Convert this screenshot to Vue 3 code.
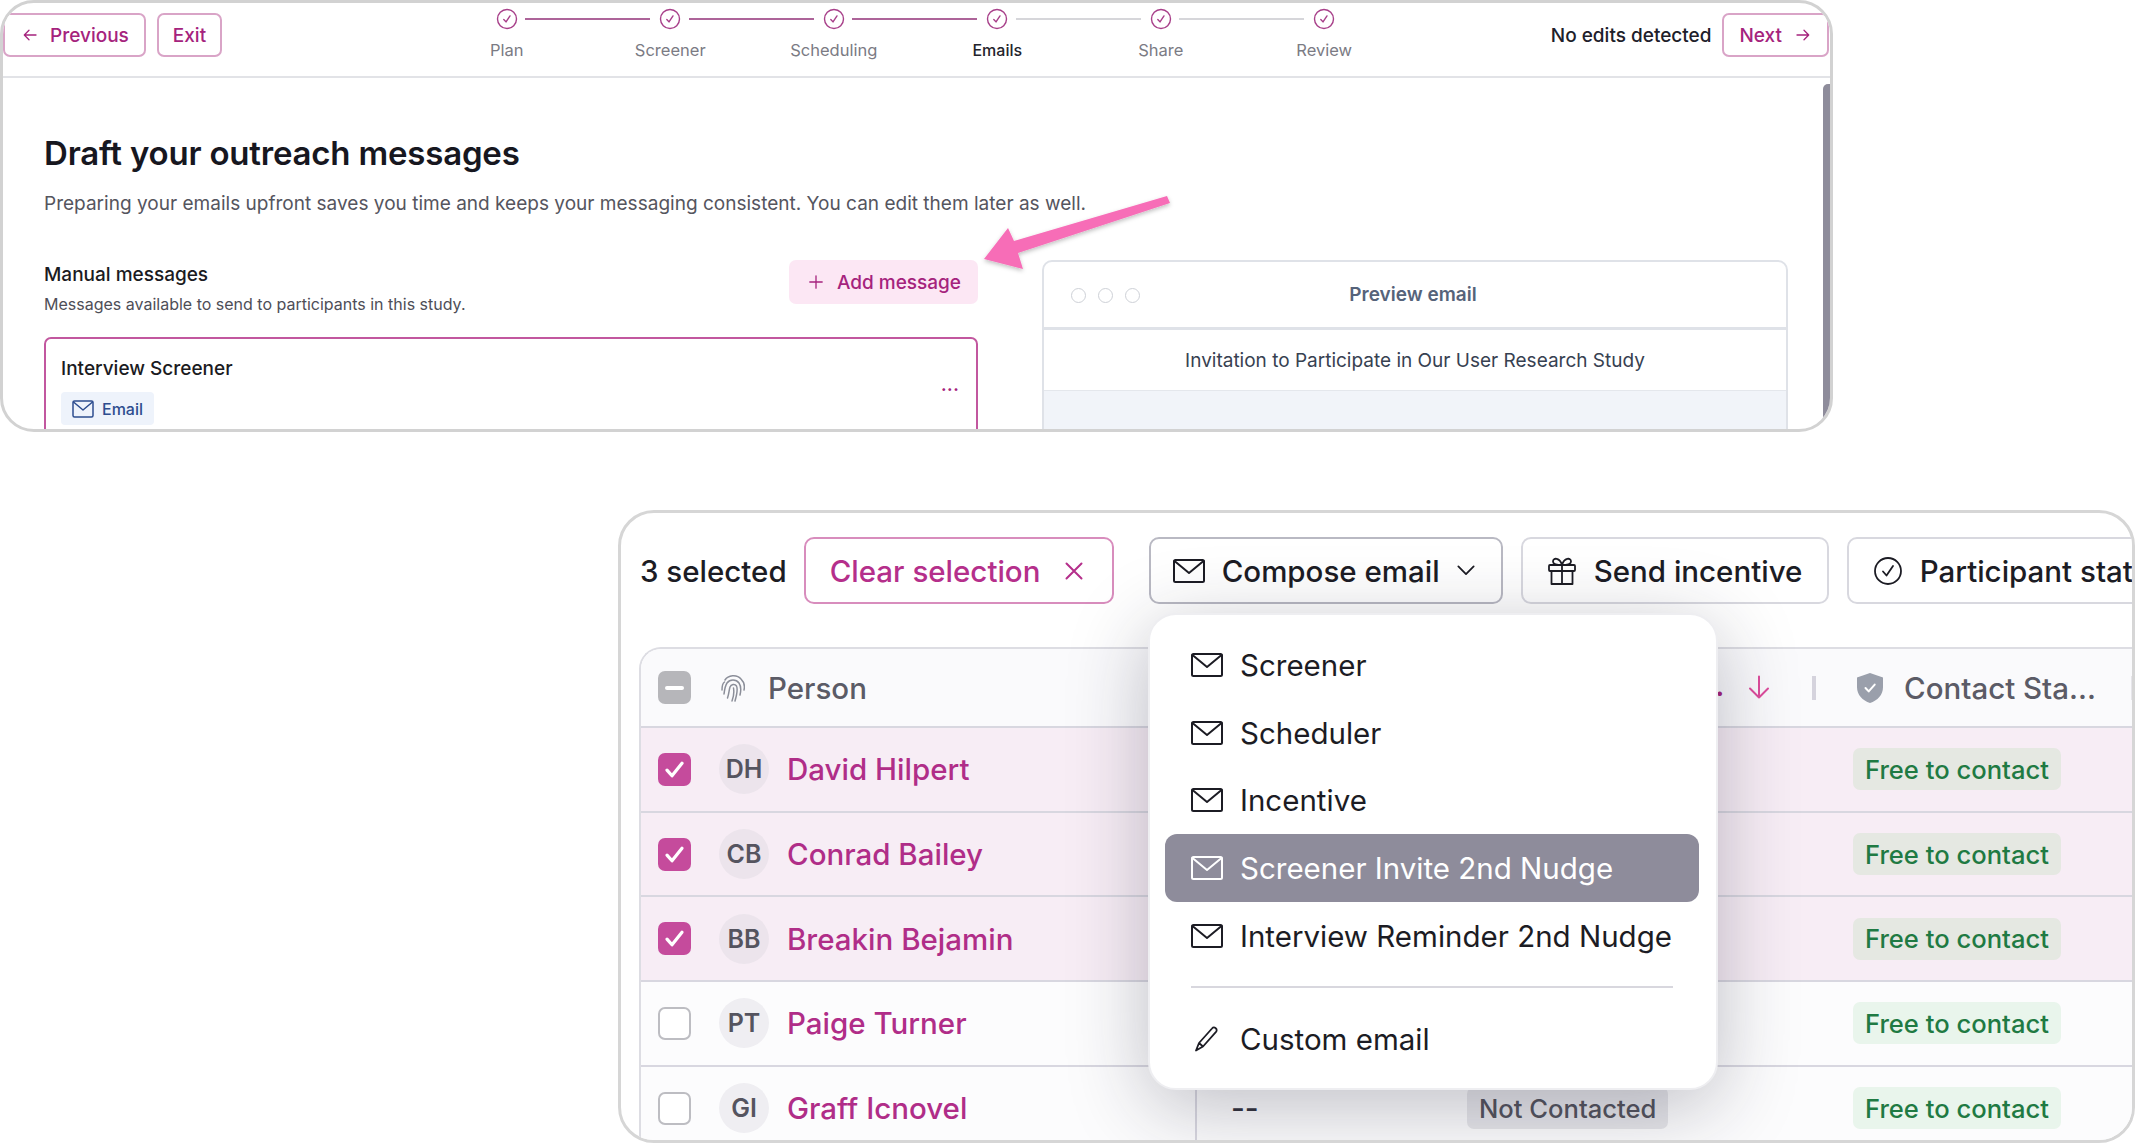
<template>
  <div class="page">
    <section class="study-window">
      <header class="study-header">
        <div class="head-left">
          <button class="btn-outline prev">
            <svg class="ic16" viewBox="0 0 16 16"><path d="M14 8H2.5M7 3.2 2.3 8 7 12.8" /></svg>
            Previous
          </button>
          <button class="btn-outline exit">Exit</button>
        </div>
        <div class="stepper">
          <div v-for="(s, i) in steps" :key="s.name" class="step" :class="{ current: s.current }">
            <span class="step-dot">
              <svg viewBox="0 0 22 22"><circle cx="11" cy="11" r="9.5" /><path d="m7.8 11.5 2.2 2.4 4-6" /></svg>
            </span>
            <span v-if="i < steps.length - 1" class="step-line" :class="{ done: s.done }"></span>
            <span class="step-name">{{ s.name }}</span>
          </div>
        </div>
        <div class="head-right">
          <span class="no-edits">No edits detected</span>
          <button class="btn-outline next">
            Next
            <svg class="ic16" viewBox="0 0 16 16"><path d="M2 8h11.5M9 3.2 13.7 8 9 12.8" /></svg>
          </button>
        </div>
      </header>

      <div class="study-body">
        <h1>Draft your outreach messages</h1>
        <p class="lead">Preparing your emails upfront saves you time and keeps your messaging consistent. You can edit them later as well.</p>
        <div class="columns">
          <div class="messages">
            <div class="messages-top">
              <div class="messages-title">
                <h2>Manual messages</h2>
                <p class="hint">Messages available to send to participants in this study.</p>
              </div>
              <button class="btn-add">
                <svg class="ic16" viewBox="0 0 16 16"><path d="M8 1.8v12.4M1.8 8h12.4" /></svg>
                Add message
              </button>
            </div>
            <div class="msg-card">
              <div>
                <div class="msg-title">Interview Screener</div>
                <span class="chip-email">
                  <svg viewBox="0 0 22 18"><rect x="1" y="1" width="20" height="16" rx="1.5" /><path d="m1.5 2 9.5 8 9.500-8" /></svg>
                  Email
                </span>
              </div>
              <span class="dots">...</span>
            </div>
          </div>
          <div class="preview">
            <div class="preview-bar">
              <span class="traffic"><i></i><i></i><i></i></span>
              Preview email
            </div>
            <div class="preview-subject">Invitation to Participate in Our User Research Study</div>
            <div class="preview-mail"></div>
          </div>
        </div>
        <span class="scroll-thumb"></span>
      </div>

      <svg class="arrow" viewBox="0 0 220 100" width="220" height="100">
        <defs>
          <filter id="arrowShadow" x="-20%" y="-20%" width="140%" height="150%">
            <feDropShadow dx="0" dy="2" stdDeviation="2" flood-color="#000" flood-opacity=".25" />
          </filter>
        </defs>
        <path filter="url(#arrowShadow)" d="M186 2 189 9 37 59 42 75 3 65 27 34 33 47Z" fill="#f76db7" />
      </svg>
    </section>

    <section class="people-window">
      <div class="toolbar">
        <span class="sel-count">3 selected</span>
        <button class="tool tool-clear">
          Clear selection
          <svg class="ic20" viewBox="0 0 20 20"><path d="m2.500 2.500 15 15M17.500 2.500l-15 15" /></svg>
        </button>
        <button class="tool tool-compose">
          <svg class="ic-mail" viewBox="0 0 32 24"><rect x="1" y="1" width="30" height="22" rx="1.500" /><path d="m1.500 2 14.500 12L30.500 2" /></svg>
          Compose email
          <svg class="ic-chev" viewBox="0 0 20 12"><path d="m1.500 1.500 8.500 8.500 8.500-8.500" /></svg>
        </button>
        <button class="tool tool-plain">
          <svg class="ic-gift" viewBox="0 0 30 30">
            <rect x="2" y="9" width="26" height="6" rx="1" />
            <path d="M4.500 15v13h21V15M15 9v19M15 9c-2-7-9-8-9-3.500C6 8.500 11 9 15 9Zm0 0c2-7 9-8 9-3.500C24 8.500 19 9 15 9Z" />
          </svg>
          Send incentive
        </button>
        <button class="tool tool-plain tool-status">
          <svg class="ic-gift" viewBox="0 0 30 30"><circle cx="15" cy="15" r="13" /><path d="m10 15.500 3.500 4L20 10" /></svg>
          Participant status
        </button>
      </div>

      <div class="table">
        <div class="t-row t-head">
          <div class="c-person">
            <span class="check minus"><i></i></span>
            <svg class="fingerprint" viewBox="0 0 24 28">
              <path d="M4 6C7 1 16 0 20 5c3 3 4 7 3 11M1 16c0-4 1-7 2.500-8M3 20c.5-4 1-8 3-11 3-4 9-4 12 0 2 3 2 8 1 12M6.500 24C8 20 8 16 9 13c1-3 5-3.500 6.500-1 1.500 3 .5 8-1.500 15M11 27c2-5 2-10 1.500-13" />
            </svg>
            <span class="head-label">Person</span>
          </div>
          <div class="c-mid">
            <span class="sort-dot">.</span>
            <svg class="ic-sort" viewBox="0 0 22 24"><path d="M11 1.500v21M2 13.500l9 9 9-9" /></svg>
            <span class="col-rule"></span>
          </div>
          <div class="c-status">
            <svg class="shield" viewBox="0 0 28 32">
              <path d="M14 1 27 5.500V15c0 8-5.500 13.500-13 16C6.500 28.500 1 23 1 15V5.500Z" fill="#9a9fab" />
              <path d="m9.500 16 3.200 3.400 6-6.800" fill="none" stroke="#fff" stroke-width="2" />
            </svg>
            <span class="head-label">Contact Sta...</span>
          </div>
          <span class="col-rule edge"></span>
        </div>

        <div v-for="p in people" :key="p.initials" class="t-row" :class="{ picked: p.picked }">
          <div class="c-person">
            <span class="check" :class="{ on: p.picked }">
              <svg v-if="p.picked" viewBox="0 0 20 20"><path d="m4 10.500 4 4.500 8-10" /></svg>
            </span>
            <span class="avatar">{{ p.initials }}</span>
            <span class="name">{{ p.name }}</span>
          </div>
          <div class="c-mid divided">
            <template v-if="p.showContacted">
              <span class="dash">--</span>
              <span class="chip-grey">Not Contacted</span>
            </template>
          </div>
          <div class="c-status">
            <span class="chip-free">Free to contact</span>
          </div>
        </div>
      </div>

      <div class="menu">
        <div
          v-for="m in menuItems"
          :key="m.label"
          class="menu-item"
          :class="{ active: m.active }"
        >
          <svg class="ic-mail small" viewBox="0 0 32 24"><rect x="1" y="1" width="30" height="22" rx="1.500" /><path d="m1.500 2 14.500 12L30.500 2" /></svg>
          {{ m.label }}
        </div>
        <div class="menu-sep"></div>
        <div class="menu-item custom">
          <svg class="ic-pen" viewBox="0 0 28 28"><path d="M6 18 19 3.500c1-1.200 2.500-1.300 3.700-.3 1.200 1 1.300 2.500.3 3.700L10 21.500l-7 4Z M6 18l4 3.500" /></svg>
          Custom email
        </div>
      </div>
    </section>
  </div>
</template>

<script setup>
const steps = [
  { name: 'Plan', done: true },
  { name: 'Screener', done: true },
  { name: 'Scheduling', done: true },
  { name: 'Emails', current: true },
  { name: 'Share' },
  { name: 'Review' }
]

// the middle column is hidden by the open menu on every row but the last
const people = [
  { initials: 'DH', name: 'David Hilpert', picked: true },
  { initials: 'CB', name: 'Conrad Bailey', picked: true },
  { initials: 'BB', name: 'Breakin Bejamin', picked: true },
  { initials: 'PT', name: 'Paige Turner', picked: false },
  { initials: 'GI', name: 'Graff Icnovel', picked: false, showContacted: true }
]

const menuItems = [
  { label: 'Screener' },
  { label: 'Scheduler' },
  { label: 'Incentive' },
  { label: 'Screener Invite 2nd Nudge', active: true },
  { label: 'Interview Reminder 2nd Nudge' }
]
</script>

<style>
html,
body {
  margin: 0;
  background: #fff;
  overflow: hidden;
}
</style>

<style scoped>
.page {
  width: 2136px;
  height: 1143px;
  overflow: hidden;
  font-family: Inter, "Liberation Sans", sans-serif;
  color: #18181f;
}

button {
  font-family: inherit;
  cursor: pointer;
}

svg {
  fill: none;
  stroke: currentColor;
  stroke-linecap: round;
  stroke-linejoin: round;
  flex: none;
}

.ic16 {
  width: 16px;
  height: 16px;
  stroke-width: 1.3;
}

/* top window */
.study-window {
  position: relative;
  box-sizing: border-box;
  width: 1833px;
  height: 432px;
  border: 3px solid #d2d2d2;
  border-radius: 34px;
  overflow: hidden;
  background: #fff;
}

.study-header {
  box-sizing: border-box;
  height: 75px;
  border-bottom: 2px solid #e2e3e7;
  position: relative;
  display: flex;
  align-items: flex-start;
  justify-content: space-between;
  padding: 10px 1px 0 0;
}

.head-left,
.head-right {
  display: flex;
  align-items: center;
  gap: 11px;
}

.btn-outline {
  box-sizing: border-box;
  height: 44px;
  display: flex;
  align-items: center;
  gap: 13px;
  padding: 0 16px 0 15px;
  background: #fff;
  border: 2px solid #d9a4c7;
  border-radius: 7px;
  color: #a5237d;
  font-size: 19px;
  font-weight: 500;
}

.btn-outline.prev {
  gap: 12px;
  padding: 0 15px 0 17px;
}

.btn-outline.exit {
  padding: 0 14px;
}

.no-edits {
  font-size: 19px;
  font-weight: 500;
  color: #20202a;
}

.stepper {
  position: absolute;
  left: 422px;
  top: 0;
  display: flex;
}

.step {
  position: relative;
  width: 163.5px;
  height: 72px;
  display: flex;
  flex-direction: column;
  align-items: center;
}

.step-dot {
  margin-top: 5px;
  width: 22px;
  height: 22px;
  color: #a8408a;
}

.step-dot svg {
  display: block;
  width: 22px;
  height: 22px;
  stroke-width: 1.4;
}

.step-line {
  position: absolute;
  left: 100px;
  width: 125px;
  top: 15px;
  height: 2px;
  background: #d6d6da;
}

.step-line.done {
  background: #ad6499;
}

.step-name {
  margin-top: 10px;
  font-size: 16.500px;
  color: #7b7b84;
}

.step.current .step-name {
  color: #23232c;
  font-size: 16px;
  line-height: 20px;
  font-weight: 500;
}

.study-body {
  position: relative;
  box-sizing: border-box;
  height: 354px;
  padding: 0 41px;
  overflow: hidden;
}

h1 {
  margin: 53px 0 0;
  font-size: 33px;
  line-height: 44px;
  font-weight: 600;
  letter-spacing: -0.2px;
  color: #17171f;
}

.lead {
  margin: 15px 0 0;
  font-size: 19.050px;
  line-height: 28px;
  color: #55555e;
}

.columns {
  display: flex;
  align-items: flex-start;
  gap: 64px;
  margin-top: 42px;
}

.messages {
  width: 934px;
  flex: none;
}

.messages-top {
  display: flex;
  justify-content: space-between;
  align-items: flex-start;
}

.messages-title {
  padding-top: 2px;
}

h2 {
  margin: 0;
  font-size: 19px;
  line-height: 26px;
  font-weight: 500;
  color: #1b1b22;
}

.hint {
  margin: 4px 0 0;
  font-size: 16px;
  line-height: 24px;
  color: #4e4e57;
}

.btn-add {
  box-sizing: border-box;
  height: 44px;
  display: flex;
  align-items: center;
  gap: 13px;
  padding: 0 17px 0 19px;
  background: #fce7f4;
  border: none;
  border-radius: 7px;
  color: #a5237d;
  font-size: 19px;
  font-weight: 500;
}

.msg-card {
  box-sizing: border-box;
  margin-top: 21px;
  height: 120px;
  padding: 16px 15px;
  display: flex;
  justify-content: space-between;
  align-items: flex-start;
  border: 2px solid #c2579f;
  border-radius: 7px;
}

.msg-title {
  font-size: 19px;
  line-height: 28px;
  font-weight: 500;
  color: #1b1b22;
}

.chip-email {
  margin-top: 9px;
  display: inline-flex;
  align-items: center;
  gap: 8px;
  height: 33px;
  padding: 0 11px;
  border-radius: 4px;
  background: #eef3fb;
  color: #2d4d8f;
  font-size: 16px;
  font-weight: 500;
}

.chip-email svg {
  width: 22px;
  height: 18px;
  stroke-width: 1.5;
}

.dots {
  margin-top: 19px;
  margin-right: 2px;
  color: #a5237d;
  font-size: 20px;
  font-weight: 500;
  line-height: 20px;
}

.preview {
  box-sizing: border-box;
  width: 746px;
  height: 200px;
  border: 2px solid #dfe2e8;
  border-radius: 10px;
  overflow: hidden;
}

.preview-bar {
  position: relative;
  height: 65px;
  display: flex;
  align-items: center;
  justify-content: center;
  border-bottom: 3px solid #dfe2e8;
  font-size: 19px;
  font-weight: 600;
  color: #56637a;
  padding-right: 4px;
}

.traffic {
  position: absolute;
  left: 27px;
  top: 26px;
  display: flex;
  gap: 12px;
}

.traffic i {
  width: 15px;
  height: 15px;
  box-sizing: border-box;
  border: 1.500px solid #ced1d7;
  border-radius: 50%;
}

.preview-subject {
  height: 60px;
  display: flex;
  align-items: center;
  justify-content: center;
  border-bottom: 1px solid #e4e7ec;
  font-size: 19px;
  color: #374151;
}

.preview-mail {
  height: 80px;
  background: #f1f4f9;
}

.scroll-thumb {
  position: absolute;
  right: 0;
  top: 6px;
  bottom: 0;
  width: 7px;
  border-radius: 5px 0 0 5px;
  background: #8e8c9b;
}

.arrow {
  position: absolute;
  left: 978px;
  top: 191px;
  stroke: none;
}

/* bottom window */
.people-window {
  position: relative;
  box-sizing: border-box;
  margin: 78px 0 0 618px;
  width: 1517px;
  height: 633px;
  border: 3px solid #d6d6d6;
  border-radius: 36px;
  overflow: hidden;
  background: #fff;
}

.toolbar {
  display: flex;
  align-items: center;
  padding: 24px 0 0 19px;
  white-space: nowrap;
}

.sel-count {
  font-size: 29.500px;
  font-weight: 500;
  color: #1c1c24;
  margin-right: 17px;
}

.tool {
  box-sizing: border-box;
  flex: none;
  height: 67px;
  display: flex;
  align-items: center;
  background: #fff;
  border: 2px solid #d8d8df;
  border-radius: 10px;
  font-size: 29.500px;
  font-weight: 500;
  color: #1c1c24;
}

.tool-clear {
  width: 310px;
  padding: 0 24px;
  gap: 24px;
  border-color: #d88dbd;
  color: #b52f8b;
}

.ic20 {
  width: 20px;
  height: 20px;
  stroke-width: 2;
}

.tool-compose {
  width: 354px;
  margin-left: 35px;
  padding: 0 22px;
  gap: 17px;
  border-color: #b9b9c3;
}

.ic-mail {
  width: 32px;
  height: 24px;
  stroke-width: 2;
}

.ic-chev {
  width: 18px;
  height: 11px;
  stroke-width: 2;
}

.tool-plain {
  margin-left: 18px;
  padding: 0 24px;
  gap: 17px;
  width: 308px;
}

.tool-status {
  width: 400px;
}

.ic-gift {
  width: 30px;
  height: 30px;
  stroke-width: 1.800;
}

.table {
  position: relative;
  margin: 43px 0 0 18px;
  width: 1600px;
  border: 2px solid #dddde3;
  border-right: none;
  border-bottom: none;
  border-top-left-radius: 22px;
  overflow: hidden;
}

.t-row {
  height: 84.700px;
  box-sizing: border-box;
  display: flex;
  align-items: center;
  background: #fcfcfd;
  border-top: 2px solid #d8d7e0;
}

.t-row.picked {
  background: #f7edf5;
}

.t-head {
  position: relative;
  height: 77px;
  border-top: none;
  background: #fafafc;
}

.c-person {
  box-sizing: border-box;
  width: 554px;
  height: 100%;
  flex: none;
  display: flex;
  align-items: center;
  padding-left: 17px;
}

.c-mid {
  box-sizing: border-box;
  width: 658px;
  height: 100%;
  flex: none;
  display: flex;
  align-items: center;
}

.c-mid.divided {
  border-left: 2px solid #d8d7e0;
  padding-left: 34px;
}

.c-status {
  height: 100%;
  display: flex;
  align-items: center;
}

.check {
  box-sizing: border-box;
  width: 33px;
  height: 33px;
  flex: none;
  display: flex;
  align-items: center;
  justify-content: center;
  background: #fff;
  border: 2px solid #bdbdc2;
  border-radius: 7px;
}

.check.minus {
  background: #b6b6ba;
  border: none;
}

.check.minus i {
  width: 19px;
  height: 4px;
  border-radius: 2px;
  background: #fff;
}

.check.on {
  background: #c54b9c;
  border: none;
}

.check svg {
  width: 25px;
  height: 25px;
  color: #fff;
  stroke-width: 2.600;
}

.fingerprint {
  width: 24px;
  height: 28px;
  margin-left: 30px;
  color: #8b8e99;
  stroke-width: 1.500;
}

.head-label {
  font-size: 29.500px;
  font-weight: 500;
  color: #5b5b66;
  margin-left: 23px;
}

.avatar {
  width: 50px;
  height: 50px;
  margin-left: 28px;
  margin-right: 18px;
  flex: none;
  display: flex;
  align-items: center;
  justify-content: center;
  border-radius: 50%;
  background: #efeef2;
  color: #55545f;
  font-size: 25px;
  font-weight: 600;
}

.picked .avatar {
  background: #ece4ec;
}

.name {
  font-size: 29.500px;
  font-weight: 500;
  color: #b02d88;
}

.dash {
  font-size: 30px;
  font-weight: 500;
  color: #33333d;
  width: 236px;
}

.chip-grey {
  box-sizing: border-box;
  height: 42px;
  padding: 0 12px;
  display: flex;
  align-items: center;
  border-radius: 7px;
  background: #e6e6ea;
  color: #54545e;
  font-size: 25.600px;
  font-weight: 500;
}

.chip-free {
  box-sizing: border-box;
  height: 42px;
  padding: 0 12px;
  display: flex;
  align-items: center;
  border-radius: 7px;
  background: #e9f5ec;
  color: #1f7a43;
  font-size: 25.600px;
  font-weight: 500;
}

.t-row.picked .chip-free {
  background: #e5e8e2;
}

.sort-dot {
  position: absolute;
  left: 1074px;
  top: 18px;
  color: #a5237d;
  font-size: 29.500px;
  font-weight: 600;
}

.ic-sort {
  position: absolute;
  left: 1107px;
  top: 26px;
  width: 22px;
  height: 24px;
  color: #dd4c9c;
  stroke-width: 2;
}

.col-rule {
  position: absolute;
  left: 1171px;
  top: 27px;
  width: 4px;
  height: 24px;
  background: #d5d3dd;
}

.col-rule.edge {
  left: 1490px;
  background: #e6e5ea;
}

.shield {
  width: 28px;
  height: 32px;
  stroke: none;
  margin-left: 3px;
}

.shield path + path {
  stroke: #fff;
}

.c-status .head-label {
  margin-left: 20px;
}

.menu {
  position: absolute;
  left: 527px;
  top: 100px;
  box-sizing: border-box;
  width: 570px;
  height: 477px;
  padding: 16px 17px 0 15px;
  background: #fff;
  border: 2px solid #eeeef1;
  border-radius: 28px;
  box-shadow: 0 16px 80px rgba(30, 28, 50, 0.28);
}

.menu-item {
  box-sizing: border-box;
  height: 67.700px;
  padding-left: 26px;
  display: flex;
  align-items: center;
  gap: 17px;
  border-radius: 12px;
  font-size: 29.500px;
  font-weight: 400;
  color: #1c1c24;
}

.menu-item.active {
  background: #8e8c9b;
  color: #fff;
}

.menu-sep {
  height: 2px;
  margin: 17px 26px 18px 26px;
  background: #d8d7de;
}

.menu-item.custom {
  height: 66px;
}

.ic-pen {
  width: 28px;
  height: 28px;
  stroke-width: 1.800;
  margin-left: 2px;
  margin-right: 2px;
}
</style>
